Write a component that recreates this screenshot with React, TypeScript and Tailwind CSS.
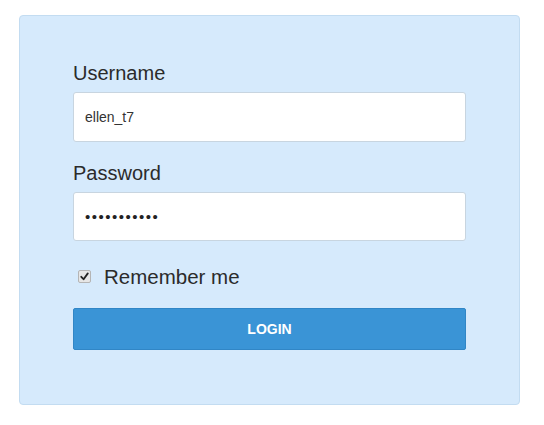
import { useState } from "react";

export default function App() {
  const [username, setUsername] = useState("ellen_t7");
  const [password, setPassword] = useState("ellenpass77");
  const [remember, setRemember] = useState(true);

  return (
    <div className="min-h-[425px] w-[544px] bg-white pl-[19px] pt-[15px] font-['Liberation_Sans',Arial,sans-serif] text-[#2b2b2b]">
      <form
        className="flex h-[390px] w-[501px] flex-col rounded-[4px] border border-[#c3dcf1] bg-[#d6eafc] px-[53px] pt-[45px]"
        onSubmit={(e) => e.preventDefault()}
      >
        <label className="block text-[20px] leading-[25px]">Username</label>
        <input
          className="mt-[6px] h-[50px] w-full rounded-[3px] border border-[#c8d5e0] bg-white px-[11px] text-[14px] text-[#333] outline-none"
          value={username}
          onChange={(e) => setUsername(e.target.value)}
        />

        <label className="mt-[19px] block text-[20px] leading-[25px]">Password</label>
        <input
          type="password"
          className="mt-[6px] h-[49px] w-full rounded-[3px] border border-[#c8d5e0] bg-white px-[11px] text-[15px] tracking-[1.5px] text-[#222] outline-none"
          value={password}
          onChange={(e) => setPassword(e.target.value)}
        />

        <label
          className="mt-[23px] flex cursor-pointer items-center gap-[13px] pl-[5px] text-[20.5px] leading-[25px]"
          onClick={() => setRemember(!remember)}
        >
          <span className="flex h-[13px] w-[13px] items-center justify-center rounded-[2px] border border-[#b5b5b5] bg-[#e6e6e6]">
            {remember && (
              <svg viewBox="0 0 12 12" className="h-[11px] w-[11px]">
                <path d="M2.5 6.3 L5 9 L9.6 2.6" fill="none" stroke="#222" strokeWidth="2" strokeLinecap="round" strokeLinejoin="round" />
              </svg>
            )}
          </span>
          Remember me
        </label>

        <button
          type="submit"
          className="mt-[19px] h-[42px] w-full rounded-[2px] border border-[#3186c6] bg-[#3a94d6] text-[14px] font-bold text-white"
        >
          LOGIN
        </button>
      </form>
    </div>
  );
}
